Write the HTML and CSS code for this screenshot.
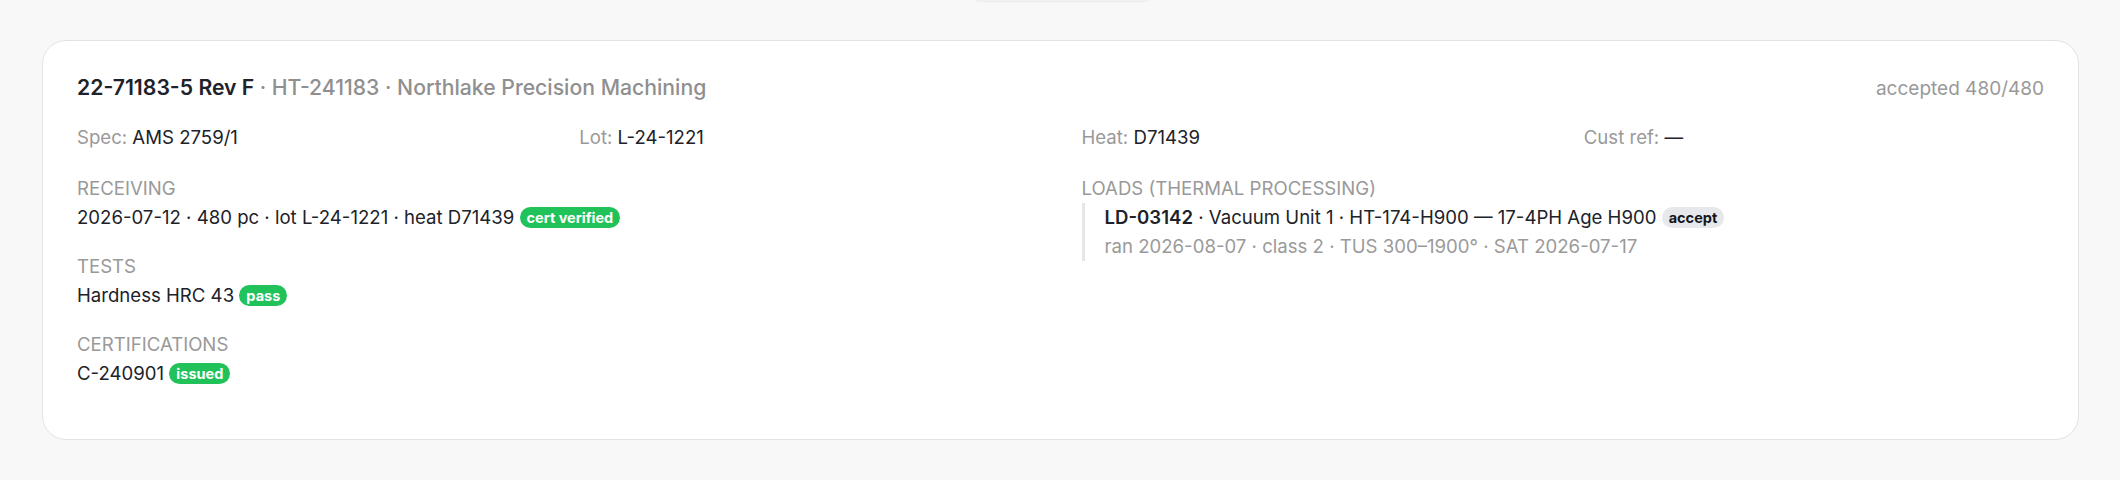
FILE: index.html
```html
<!DOCTYPE html>
<html lang="en">
<head>
    <meta charset="UTF-8">
    <meta name="viewport" content="width=device-width, initial-scale=1.0">
    <title>Part Traveler - 22-71183-5 Rev F</title>
    <link rel="stylesheet" href="styles.css">
</head>
<body>
    <div class="page">
        <div class="top-strip">
            <div class="tab-pill"></div>
        </div>

        <div class="card">
            <div class="card-head">
                <div class="title">
                    22-71183-5 Rev F <span class="sub">· HT-241183 · Northlake Precision Machining</span>
                </div>
                <div class="status">accepted 480/480</div>
            </div>

            <div class="meta">
                <div><span class="key">Spec:</span> AMS 2759/1</div>
                <div><span class="key">Lot:</span> L-24-1221</div>
                <div><span class="key">Heat:</span> D71439</div>
                <div><span class="key">Cust ref:</span> —</div>
            </div>

            <div class="sections">
                <div class="col">
                    <div class="section">
                        <div class="label">Receiving</div>
                        <div class="line">2026-07-12 · 480 pc · lot L-24-1221 · heat D71439 <span class="badge green">cert verified</span></div>
                    </div>
                    <div class="section">
                        <div class="label">Tests</div>
                        <div class="line">Hardness HRC 43 <span class="badge green">pass</span></div>
                    </div>
                    <div class="section">
                        <div class="label">Certifications</div>
                        <div class="line">C-240901 <span class="badge green">issued</span></div>
                    </div>
                </div>
                <div class="col">
                    <div class="section">
                        <div class="label">Loads (thermal processing)</div>
                        <div class="load">
                            <div class="line"><b>LD-03142</b> · Vacuum Unit 1 · HT-174-H900 — 17-4PH Age H900 <span class="badge grey">accept</span></div>
                            <div class="line muted">ran 2026-08-07 · class 2 · TUS 300–1900° · SAT 2026-07-17</div>
                        </div>
                    </div>
                </div>
            </div>
        </div>
    </div>
</body>
</html>
```

FILE: styles.css
```css
body {
    font-family: 'Inter', 'Noto Sans', sans-serif;
    background-color: #f8f8f8;
    color: #202229;
    margin: 0;
    padding: 0;
}

.page {
    padding: 0 41px 0 42px;
}

.top-strip {
    height: 40px;
    display: flex;
    justify-content: center;
}

.tab-pill {
    width: 185px;
    height: 32px;
    margin-top: -31px;
    margin-left: 4px;
    background-color: #f1f1f1;
    border-radius: 12px;
    box-shadow: 0 1px 2px rgba(0, 0, 0, 0.06);
}

.card {
    background-color: #fff;
    border: 1.5px solid #e3e3e3;
    border-radius: 24px;
    padding: 32px 34px 31px 34px;
}

.card-head {
    display: flex;
    justify-content: space-between;
    align-items: baseline;
}

.title {
    font-size: 21.2px;
    line-height: 29px;
    font-weight: 600;
}

.title .sub {
    color: #8f8f8f;
    font-weight: 500;
}

.status {
    font-size: 19px;
    color: #999;
}

.meta {
    display: grid;
    grid-template-columns: repeat(4, 1fr);
    column-gap: 42px;
    margin-top: 21px;
    font-size: 18.6px;
    line-height: 29px;
}

.key {
    color: #999;
}

.sections {
    display: grid;
    grid-template-columns: 1fr 1fr;
    column-gap: 42px;
    margin-top: 22px;
}

.section {
    margin-bottom: 20px;
}

.label {
    font-size: 18.6px;
    line-height: 29px;
    color: #999;
    text-transform: uppercase;
}

.line {
    font-size: 18.6px;
    line-height: 29px;
}

.line b {
    font-weight: 600;
}

.muted {
    color: #9a9a9a;
}

.load {
    border-left: 3px solid #e6e6e6;
    padding-left: 20px;
}

.badge {
    display: inline-block;
    font-size: 14.5px;
    line-height: 21px;
    font-weight: 700;
    padding: 0 7px;
    border-radius: 999px;
    vertical-align: 1px;
}

.badge.green {
    background-color: #22c25a;
    color: #fff;
}

.badge.grey {
    background-color: #e6e8ec;
    color: #14161b;
}
```
